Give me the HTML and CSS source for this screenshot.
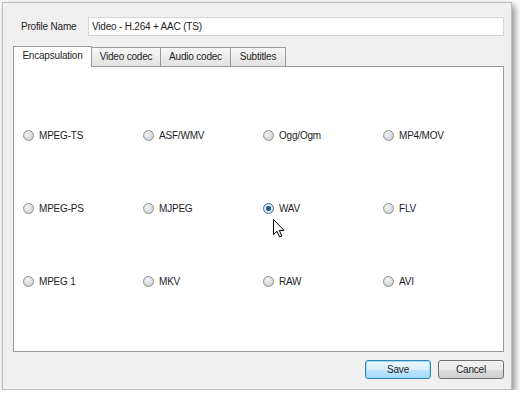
FILE: index.html
```html
<!DOCTYPE html>
<html lang="en">
<head>
  <meta charset="UTF-8" />
  <title>Convert profile</title>
  <link rel="stylesheet" href="styles.css">
</head>
<body>
  <div class="dialog">
    <div class="profile-row">
      <label class="profile-label" for="profileName">Profile Name</label>
      <input type="text" id="profileName" class="profile-input" value="Video - H.264 + AAC (TS)">
    </div>

    <div class="tabs">
      <div class="tab tab-encap active">Encapsulation</div>
      <div class="tab tab-video">Video codec</div>
      <div class="tab tab-audio">Audio codec</div>
      <div class="tab tab-subs">Subtitles</div>
    </div>

    <div class="panel">
      <div class="radio-grid">
        <label class="option"><input type="radio" name="mux"> MPEG-TS</label>
        <label class="option"><input type="radio" name="mux"> ASF/WMV</label>
        <label class="option"><input type="radio" name="mux"> Ogg/Ogm</label>
        <label class="option"><input type="radio" name="mux"> MP4/MOV</label>
        <label class="option"><input type="radio" name="mux"> MPEG-PS</label>
        <label class="option"><input type="radio" name="mux"> MJPEG</label>
        <label class="option"><input type="radio" name="mux" checked> WAV</label>
        <label class="option"><input type="radio" name="mux"> FLV</label>
        <label class="option"><input type="radio" name="mux"> MPEG 1</label>
        <label class="option"><input type="radio" name="mux"> MKV</label>
        <label class="option"><input type="radio" name="mux"> RAW</label>
        <label class="option"><input type="radio" name="mux"> AVI</label>
      </div>
    </div>

    <div class="actions">
      <button class="btn btn-default">Save</button>
      <button class="btn">Cancel</button>
    </div>

    <!-- mouse pointer over the WAV option -->
    <svg class="cursor" width="12" height="19" viewBox="0 0 12 19">
      <path d="M0.5 0.5 L0.5 15.5 L4 12.3 L6.6 18 L8.8 17 L6.3 11.4 L11 11.4 Z" fill="#fff" stroke="#000" stroke-width="1" stroke-linejoin="round"/>
    </svg>
  </div>
</body>
</html>
```

FILE: styles.css
```css
body {
  margin: 0;
  background: #fff;
  font-family: 'Liberation Sans', Arial, sans-serif;
  font-size: 10px;
  letter-spacing: -0.2px;
  color: #1e1e1e;
}
.dialog {
  position: relative;
  box-sizing: border-box;
  width: 510px;
  height: 388px;
  margin: 2px 0 0 2px;
  padding: 14px 7px 0 10px;
  background: #f0f0f0;
  border: 1px solid #bdbdbd;
  box-shadow: 3px 3px 7px rgba(0,0,0,0.45);
  display: flex;
  flex-direction: column;
}
.profile-row {
  display: flex;
  align-items: center;
  padding-left: 8px;
  height: 19px;
}
.profile-label {
  width: 67px;
}
.profile-input {
  flex: 1;
  box-sizing: border-box;
  height: 19px;
  margin: 0;
  padding: 0 3px;
  border: 1px solid #d6d6d6;
  background: #fff;
  font-family: inherit;
  font-size: 10px;
  letter-spacing: inherit;
  color: #1e1e1e;
  outline: none;
}
.tabs {
  display: flex;
  align-items: flex-end;
  margin-top: 9px;
  height: 21px;
  position: relative;
  z-index: 1;
}
.tab {
  box-sizing: border-box;
  height: 19px;
  text-align: center;
  line-height: 17px;
  border: 1px solid #9a9a9a;
  border-left: none;
  border-bottom: none;
  background: linear-gradient(#f6f6f6, #e2e2e2);
}
.tab-encap { width: 79px; }
.tab-video { width: 69px; }
.tab-audio { width: 70px; }
.tab-subs { width: 55px; }
.tab.active {
  height: 21px;
  margin-bottom: -1px;
  border-left: 1px solid #9a9a9a;
  background: #fff;
  line-height: 18px;
}
.panel {
  box-sizing: border-box;
  height: 286px;
  background: #fff;
  border: 1px solid #9a9a9a;
}
.radio-grid {
  display: grid;
  grid-template-columns: repeat(4, 120px);
  grid-template-rows: repeat(3, 14px);
  row-gap: 59px;
  padding: 61px 0 0 9px;
}
.option {
  display: flex;
  align-items: center;
  gap: 5px;
}
.option input {
  appearance: none;
  -webkit-appearance: none;
  width: 11px;
  height: 11px;
  margin: 0;
  border-radius: 50%;
  border: 1px solid #8e8f8f;
  background: radial-gradient(circle at 40% 35%, #f4f4f4, #c9c9c9);
  box-sizing: border-box;
}
.option input:checked {
  border-color: #3d6b94;
  background: radial-gradient(circle, #1d4f82 0, #2d6fa8 2.5px, #e8eef4 3px, #cfd6dd 5px);
}
.actions {
  display: flex;
  justify-content: flex-end;
  gap: 7px;
  margin-top: 8px;
}
.btn {
  box-sizing: border-box;
  width: 66px;
  height: 19px;
  margin: 0;
  padding: 0;
  border: 1px solid #707070;
  border-radius: 3px;
  background: linear-gradient(#f2f2f2 0, #ebebeb 50%, #dddddd 51%, #cfcfcf 100%);
  font-family: inherit;
  font-size: 10px;
  letter-spacing: inherit;
  color: #1e1e1e;
}
.btn-default {
  border-color: #3c7fb1;
  background: linear-gradient(#eaf6fd 0, #d9f0fc 50%, #bee6fd 51%, #a7d9f5 100%);
  box-shadow: inset 0 0 0 1px #8ee0fa;
}
.cursor {
  position: absolute;
  left: 270px;
  top: 216px;
}
```
